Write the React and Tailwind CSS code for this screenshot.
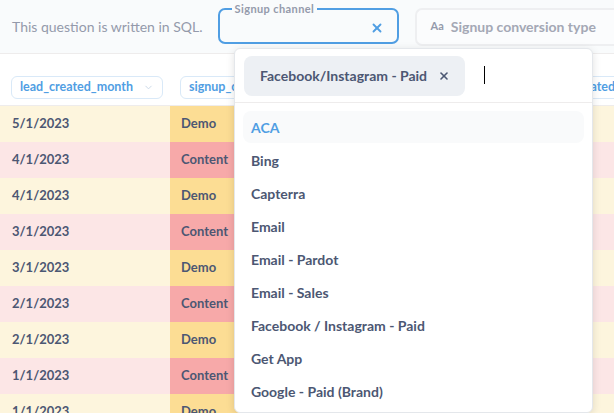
import React from 'react';
import { X, ChevronDown } from 'lucide-react';

const rows = [
  ['5/1/2023', 'Demo'],
  ['4/1/2023', 'Content'],
  ['4/1/2023', 'Demo'],
  ['3/1/2023', 'Content'],
  ['3/1/2023', 'Demo'],
  ['2/1/2023', 'Content'],
  ['2/1/2023', 'Demo'],
  ['1/1/2023', 'Content'],
  ['1/1/2023', 'Demo'],
];

const options = [
  'ACA',
  'Bing',
  'Capterra',
  'Email',
  'Email - Pardot',
  'Email - Sales',
  'Facebook / Instagram - Paid',
  'Get App',
  'Google - Paid (Brand)',
];

const ColumnPill = ({ label, chevron }) => (
  <div className="inline-flex items-center h-[23px] px-[8px] gap-[10px] border border-[#d9e9f8] rounded-[6px] bg-white text-[#509ee3] text-[12.5px] font-bold whitespace-nowrap">
    <span>{label}</span>
    {chevron && <ChevronDown size={11} strokeWidth={2} className="text-[#c7d6e6]" />}
  </div>
);

export default function App() {
  return (
    <div
      className="relative w-[614px] h-[413px] overflow-hidden bg-white text-[#4c5773]"
      style={{ fontFamily: 'Lato, "Noto Sans", sans-serif' }}
    >
      {/* Parameters bar */}
      <header className="h-[54px] flex items-center bg-[#f9fbfc] border-b border-[#eeecec] pl-[12px]">
        <span className="text-[14px] text-[#949aab] whitespace-nowrap">This question is written in SQL.</span>

        <fieldset className="ml-[15px] w-[181px] h-[40px] -mt-[6px] border-2 border-[#509ee3] rounded-[7px] pl-[12px] pr-[13px] bg-[#f9fbfc]">
          <legend className="px-[3px] text-[11px] font-bold tracking-[0.4px] text-[#949aab] leading-[10px]">
            Signup channel
          </legend>
          <div className="flex justify-end pt-[7px]">
            <X size={14} strokeWidth={3.2} className="text-[#509ee3]" />
          </div>
        </fieldset>

        <div className="ml-[16px] h-[38px] flex-1 flex items-center gap-[7px] pl-[14px] border-2 border-r-0 border-[#eeeff1] rounded-l-[7px] bg-[#fbfcfd] whitespace-nowrap">
          <span className="text-[11px] font-bold text-[#949aab]">Aa</span>
          <span className="text-[14px] font-bold text-[#a4a8b5]">Signup conversion type</span>
        </div>
      </header>

      {/* Table */}
      <div className="grid grid-cols-[170px_200px_142px_1fr] h-[52px] border-b border-[#eeecec] items-end pb-[6px]">
        <div className="pl-[11px]"><ColumnPill label="lead_created_month" chevron /></div>
        <div className="pl-[10px]"><ColumnPill label="signup_channel" chevron /></div>
        <div className="pl-[10px]"><ColumnPill label="signups" /></div>
        <div className="pl-[10px]"><ColumnPill label="signup_created_month" chevron /></div>
      </div>

      <div className="flex flex-col">
        {rows.map(([date, type], i) => {
          const demo = type === 'Demo';
          return (
            <div
              key={i}
              className={`grid grid-cols-[170px_200px_142px_1fr] h-[36px] text-[13px] font-bold ${demo ? 'bg-[#fdf5dd]' : 'bg-[#fce6e6]'}`}
            >
              <div className="pl-[12px] flex items-center">{date}</div>
              <div className={`pl-[11px] flex items-center ${demo ? 'bg-[#fcdd94]' : 'bg-[#f7a9a9]'}`}>{type}</div>
              <div className={demo ? 'bg-[#fde9b8]' : 'bg-[#f9c6c6]'} />
              <div />
            </div>
          );
        })}
      </div>

      {/* Dropdown popover */}
      <div className="absolute left-[234px] top-[48px] w-[359px] h-[365px] bg-white border border-[#e4e7eb] rounded-[6px] shadow-[0_2px_8px_rgba(0,0,0,0.12)] flex flex-col">
        <div className="h-[54px] shrink-0 border-b border-[#eeecec] flex items-center pl-[9px] gap-[19px]">
          <div className="h-[40px] flex items-center gap-[11px] pl-[16px] pr-[15px] rounded-[8px] bg-[#edf0f4] text-[14px] font-bold whitespace-nowrap">
            <span>Facebook/Instagram - Paid</span>
            <X size={12} strokeWidth={3.2} className="text-[#4c5773]" />
          </div>
          <span className="w-px h-[18px] bg-black -mt-[2px]" />
        </div>
        <ul className="flex flex-col px-[8px] pt-[8px]">
          {options.map((o, i) => (
            <li
              key={o}
              className={`flex items-center pl-[8px] text-[14px] font-bold whitespace-nowrap ${i === 0 ? 'h-[32px] mb-[1px] bg-[#f9fafb] rounded-[8px] text-[#509ee3]' : 'h-[33px]'}`}
            >
              {o}
            </li>
          ))}
        </ul>
      </div>
    </div>
  );
}
